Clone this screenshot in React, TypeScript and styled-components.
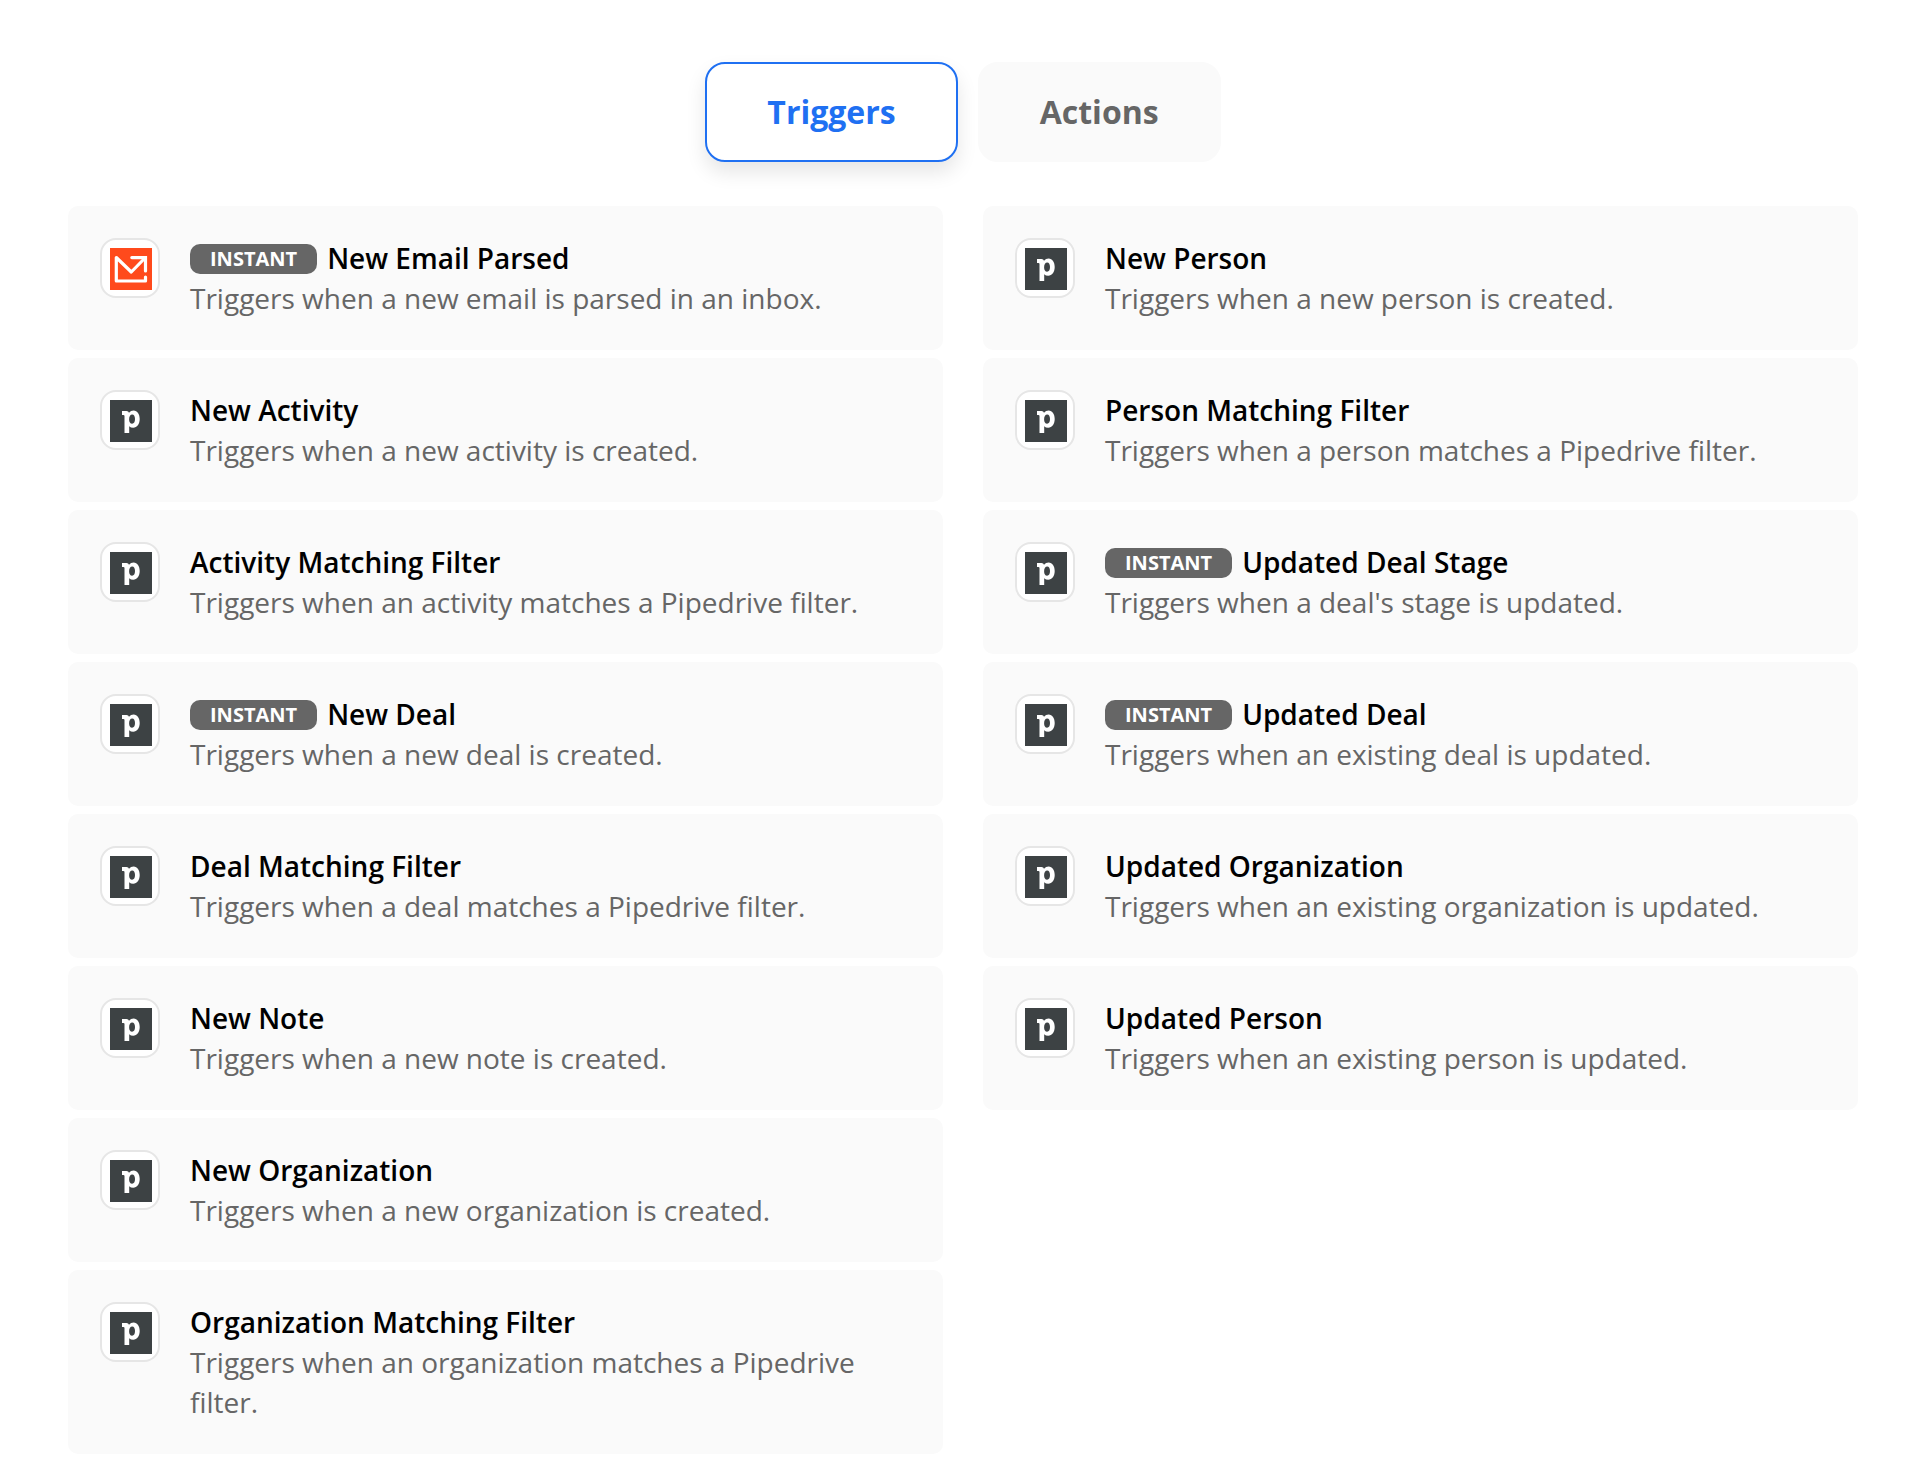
import React, { useState } from "react";
import styled, { createGlobalStyle } from "styled-components";

const GlobalStyle = createGlobalStyle`
  *, *::before, *::after { box-sizing: border-box; }
  body {
    margin: 0;
    background: #fff;
    font-family: "Open Sans", "Noto Sans", sans-serif;
    color: #000;
  }
`;

const Page = styled.main`
  padding: 62px 66px 24px 68px;
`;

const Tabs = styled.div`
  display: flex;
  justify-content: center;
  gap: 20px;
  margin-bottom: 44px;
`;

const Tab = styled.button<{ $active: boolean }>`
  height: 100px;
  padding: 0 60px;
  border: 2px solid ${(p) => (p.$active ? "#1f70f2" : "#fafafa")};
  border-radius: 20px;
  background: ${(p) => (p.$active ? "#fff" : "#fafafa")};
  box-shadow: ${(p) => (p.$active ? "0 10px 20px rgba(0, 0, 0, 0.1)" : "none")};
  color: ${(p) => (p.$active ? "#1f70f2" : "#666")};
  font-family: inherit;
  font-size: 32px;
  font-weight: 700;
  line-height: 40px;
  cursor: pointer;
`;

const Columns = styled.div`
  display: grid;
  grid-template-columns: repeat(2, minmax(0, 1fr));
  align-items: start;
  gap: 40px;
`;

const List = styled.ul`
  display: flex;
  flex-direction: column;
  gap: 8px;
  margin: 0;
  padding: 0;
  list-style: none;
`;

const Card = styled.li`
  display: flex;
  align-items: flex-start;
  gap: 30px;
  padding: 32px;
  border-radius: 10px;
  background: #fafafa;
`;

const IconFrame = styled.span`
  flex: none;
  width: 60px;
  height: 60px;
  padding: 8px 0 0 8px;
  border: 2px solid #e6e6e6;
  border-radius: 16px;
  background: #fff;

  svg { display: block; }
`;

const CardText = styled.div`
  min-width: 0;
  font-size: 28px;
  line-height: 40px;
`;

const Title = styled.h3`
  display: flex;
  align-items: center;
  gap: 10px;
  margin: 0;
  font-size: inherit;
  font-weight: 600;
`;

const Badge = styled.span`
  margin-top: 2px;
  padding: 0 20px;
  border-radius: 10px;
  background: #666;
  color: #fff;
  font-size: 20px;
  font-weight: 700;
  line-height: 30px;
`;

const Description = styled.p`
  margin: 0;
  color: #666;
`;

const MailIcon = () => (
  <svg width="42" height="42" viewBox="0 0 42 42" fill="none" aria-hidden="true">
    <rect width="42" height="42" fill="#ff4a1c" />
    <g stroke="#fff" strokeWidth="3.2" strokeLinecap="round" strokeLinejoin="round">
      <path d="M35.5 29V33H6.3V9.5L21.3 24L34.5 10.5" />
      <path d="M21.8 9.6H35.5V23" strokeLinejoin="miter" />
    </g>
  </svg>
);

const PipedriveIcon = () => (
  <svg width="42" height="42" viewBox="0 0 42 42" aria-hidden="true">
    <rect width="42" height="42" fill="#3d4244" />
    <path
      fill="#fff"
      fillRule="evenodd"
      d="M12 11H16.5Q18.5 11 19 12.7Q20.8 10.5 23.6 10.5C27.3 10.5 29.7 14 29.7 19.1C29.7 24.3 27 27.8 23.2 27.8Q20.7 27.8 19.2 26.2V32.9H14.5V16.1Q14.5 15 13.4 15H12ZM22.2 14.5C20.4 14.5 19.1 16.2 19.1 19.2C19.1 22 20.3 23.8 22.1 23.8C23.9 23.8 25 22 25 19.1C25 16.2 24 14.5 22.2 14.5Z"
    />
  </svg>
);

type Trigger = {
  title: string;
  description: string;
  instant?: boolean;
  mail?: boolean;
};

const leftTriggers: Trigger[] = [
  { title: "New Email Parsed", description: "Triggers when a new email is parsed in an inbox.", instant: true, mail: true },
  { title: "New Activity", description: "Triggers when a new activity is created." },
  { title: "Activity Matching Filter", description: "Triggers when an activity matches a Pipedrive filter." },
  { title: "New Deal", description: "Triggers when a new deal is created.", instant: true },
  { title: "Deal Matching Filter", description: "Triggers when a deal matches a Pipedrive filter." },
  { title: "New Note", description: "Triggers when a new note is created." },
  { title: "New Organization", description: "Triggers when a new organization is created." },
  { title: "Organization Matching Filter", description: "Triggers when an organization matches a Pipedrive filter." },
];

const rightTriggers: Trigger[] = [
  { title: "New Person", description: "Triggers when a new person is created." },
  { title: "Person Matching Filter", description: "Triggers when a person matches a Pipedrive filter." },
  { title: "Updated Deal Stage", description: "Triggers when a deal's stage is updated.", instant: true },
  { title: "Updated Deal", description: "Triggers when an existing deal is updated.", instant: true },
  { title: "Updated Organization", description: "Triggers when an existing organization is updated." },
  { title: "Updated Person", description: "Triggers when an existing person is updated." },
];

const TriggerList = ({ items }: { items: Trigger[] }) => (
  <List>
    {items.map((item) => (
      <Card key={item.title}>
        <IconFrame>{item.mail ? <MailIcon /> : <PipedriveIcon />}</IconFrame>
        <CardText>
          <Title>
            {item.instant && <Badge>INSTANT</Badge>}
            <span>{item.title}</span>
          </Title>
          <Description>{item.description}</Description>
        </CardText>
      </Card>
    ))}
  </List>
);

export default function App() {
  const [active, setActive] = useState("Triggers");

  return (
    <>
      <GlobalStyle />
      <Page>
        <Tabs>
          {["Triggers", "Actions"].map((name) => (
            <Tab
              key={name}
              type="button"
              aria-pressed={active === name}
              $active={active === name}
              onClick={() => setActive(name)}
            >
              {name}
            </Tab>
          ))}
        </Tabs>
        <Columns>
          <TriggerList items={leftTriggers} />
          <TriggerList items={rightTriggers} />
        </Columns>
      </Page>
    </>
  );
}
